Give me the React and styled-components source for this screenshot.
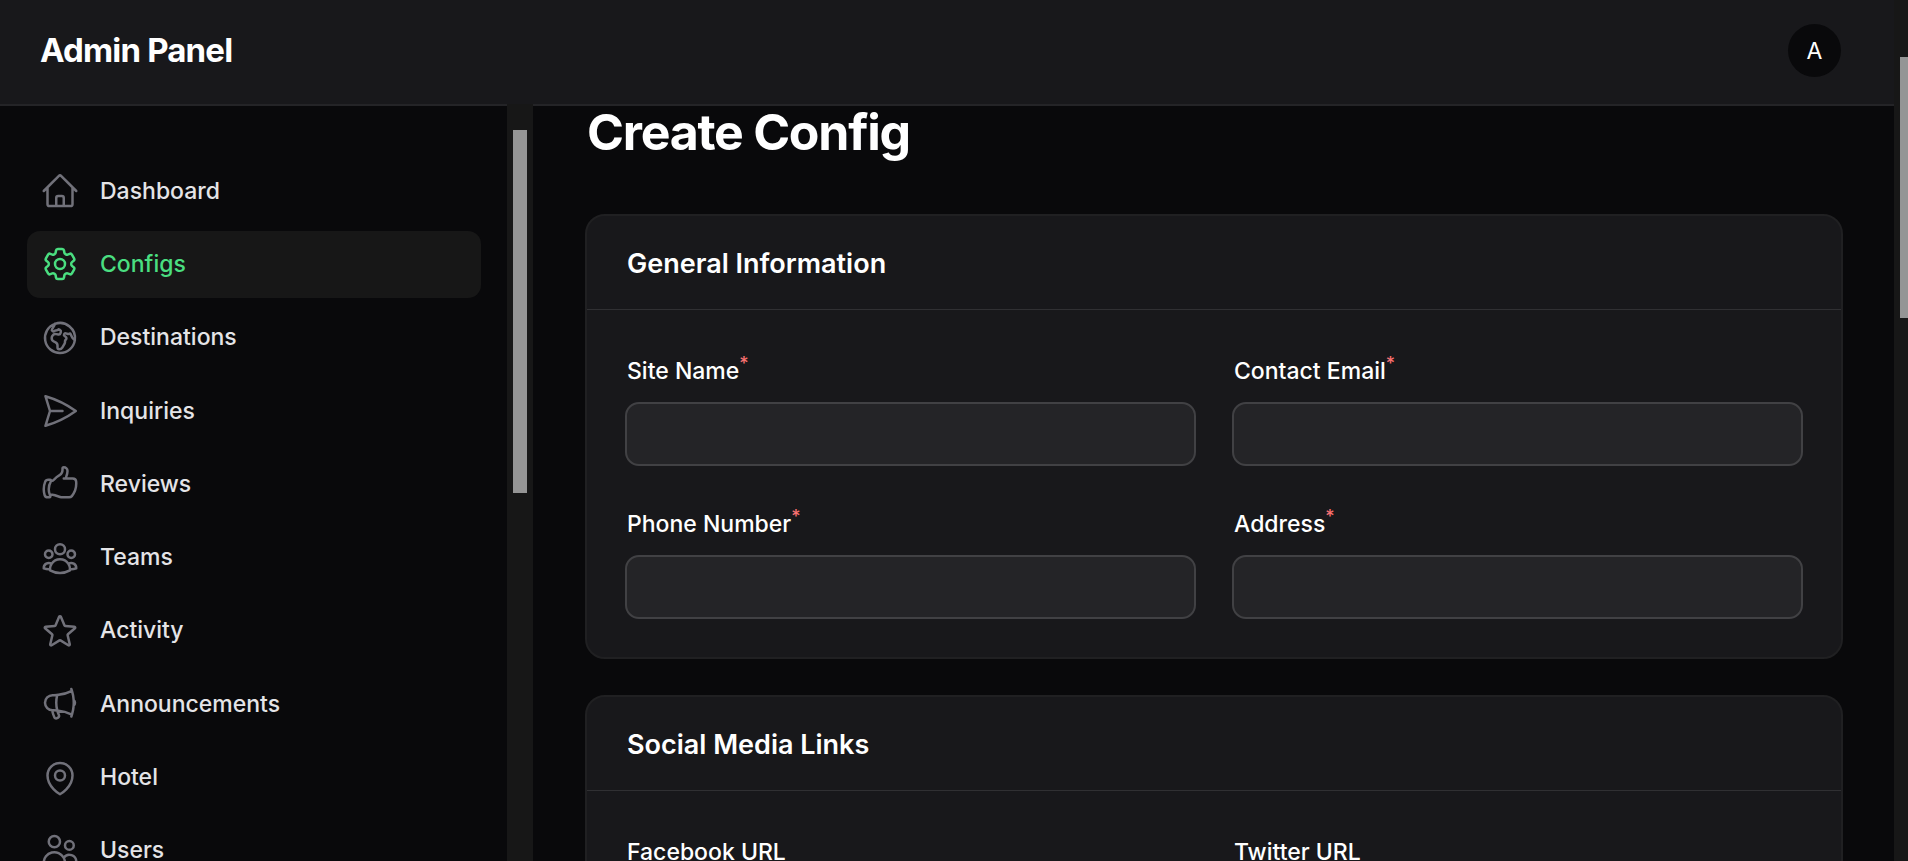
import React, { useId } from 'react';
import styled, { createGlobalStyle } from 'styled-components';
import {
  HiOutlineHome,
  HiOutlineCog6Tooth,
  HiOutlineGlobeEuropeAfrica,
  HiOutlinePaperAirplane,
  HiOutlineHandThumbUp,
  HiOutlineUserGroup,
  HiOutlineStar,
  HiOutlineMegaphone,
  HiOutlineMapPin,
  HiOutlineUsers,
} from 'react-icons/hi2';

const GlobalStyle = createGlobalStyle`
  *, *::before, *::after { box-sizing: border-box; }
  body {
    margin: 0;
    background: #09090b;
    color: #ffffff;
    font-family: Inter, "Liberation Sans", sans-serif;
  }
`;

const Page = styled.div`
  display: grid;
  grid-template-columns: minmax(0, 1fr) 14px;
  height: 100vh;
  overflow: hidden;
`;

const Shell = styled.div`
  display: flex;
  flex-direction: column;
  min-height: 0;
`;

const TopBar = styled.header`
  display: flex;
  flex: none;
  align-items: center;
  justify-content: space-between;
  padding: 24px 53px 27px 40px;
  background: #18181b;
`;

const Brand = styled.a`
  padding-bottom: 2px;
  color: #ffffff;
  font-size: 33px;
  font-weight: 700;
  line-height: 40px;
  letter-spacing: -0.025em;
  text-decoration: none;
`;

const Avatar = styled.button`
  width: 53px;
  height: 53px;
  padding: 0;
  border: 0;
  border-radius: 50%;
  background: #09090b;
  color: #ffffff;
  font: 400 23px/28px Inter, "Liberation Sans", sans-serif;
`;

const Body = styled.div`
  display: grid;
  grid-template-columns: 533px minmax(0, 1fr);
  flex: 1;
  min-height: 0;
`;

const Sidebar = styled.aside`
  display: grid;
  grid-template-columns: minmax(0, 1fr) 26px;
  min-height: 0;
`;

const Nav = styled.nav`
  min-height: 0;
  padding: 52px 26px 0 27px;
  border-top: 2px solid #242427;
  overflow: hidden;
`;

const NavList = styled.ul`
  display: grid;
  grid-auto-rows: 1fr;
  gap: 7px;
  min-height: 726px;
  margin: 0;
  padding: 0;
  list-style: none;
`;

const NavLink = styled.a`
  display: flex;
  align-items: center;
  gap: 20px;
  height: 100%;
  padding: 13px;
  border-radius: 13px;
  background: ${({ $active }) => ($active ? '#171717' : 'transparent')};
  color: ${({ $active }) => ($active ? '#4ade80' : '#e4e4e7')};
  font-size: 23px;
  font-weight: 500;
  line-height: 33px;
  text-decoration: none;

  svg {
    flex: none;
    width: 40px;
    height: 40px;
    color: ${({ $active }) => ($active ? '#4ade80' : '#71717a')};
  }
`;

const Track = styled.div`
  min-height: 0;
  padding: ${({ $start }) => $start}px 6px 0;
  background: #171717;
  overflow: hidden;
`;

const Thumb = styled.div`
  width: 14px;
  height: ${({ $length }) => $length}px;
  background: #959595;
`;

const Main = styled.main`
  display: flex;
  flex-direction: column;
  gap: 36px;
  min-height: 0;
  padding: 0 51px 0 52px;
  border-top: 2px solid #242427;
  overflow: hidden;
`;

const PageTitle = styled.h1`
  flex: none;
  margin: 0 0 20px 2px;
  font-size: 50px;
  font-weight: 700;
  line-height: 52px;
  letter-spacing: -0.025em;
`;

const Section = styled.section`
  flex: none;
  border: 2px solid #202022;
  border-radius: 20px;
  background: #18181b;
`;

const SectionHeader = styled.header`
  padding: 28px 40px 25px;
  border-bottom: 1px solid #303033;
`;

const SectionTitle = styled.h2`
  margin: 0;
  font-size: 27px;
  font-weight: 600;
  line-height: 40px;
`;

const FieldGrid = styled.div`
  display: grid;
  grid-template-columns: repeat(2, minmax(0, 1fr));
  gap: 38px 36px;
  padding: 41px 38px 38px;
`;

const Field = styled.div`
  display: flex;
  flex-direction: column;
  gap: 11px;
`;

const Label = styled.label`
  padding-left: 2px;
  font-size: 23px;
  font-weight: 500;
  line-height: 40px;
`;

const Required = styled.sup`
  color: #f87171;
  font-size: 18px;
  line-height: 0;
`;

const TextInput = styled.input`
  width: 100%;
  height: 64px;
  padding: 0 20px;
  border: 2px solid #414144;
  border-radius: 14px;
  background: #242427;
  color: #ffffff;
  font: 400 23px/40px Inter, "Liberation Sans", sans-serif;
  outline: none;
`;

const navItems = [
  { label: 'Dashboard', Icon: HiOutlineHome },
  { label: 'Configs', Icon: HiOutlineCog6Tooth, active: true },
  { label: 'Destinations', Icon: HiOutlineGlobeEuropeAfrica },
  { label: 'Inquiries', Icon: HiOutlinePaperAirplane },
  { label: 'Reviews', Icon: HiOutlineHandThumbUp },
  { label: 'Teams', Icon: HiOutlineUserGroup },
  { label: 'Activity', Icon: HiOutlineStar },
  { label: 'Announcements', Icon: HiOutlineMegaphone },
  { label: 'Hotel', Icon: HiOutlineMapPin },
  { label: 'Users', Icon: HiOutlineUsers },
];

const sections = [
  {
    title: 'General Information',
    fields: [
      { label: 'Site Name', required: true },
      { label: 'Contact Email', type: 'email', required: true },
      { label: 'Phone Number', type: 'tel', required: true },
      { label: 'Address', required: true },
    ],
  },
  {
    title: 'Social Media Links',
    fields: [
      { label: 'Facebook URL', type: 'url' },
      { label: 'Twitter URL', type: 'url' },
    ],
  },
];

function TextField({ label, type = 'text', required = false }) {
  const id = useId();
  return (
    <Field>
      <Label htmlFor={id}>
        {label}
        {required && <Required>*</Required>}
      </Label>
      <TextInput id={id} type={type} required={required} />
    </Field>
  );
}

export default function App() {
  return (
    <Page>
      <GlobalStyle />
      <Shell>
        <TopBar>
          <Brand href="#">Admin Panel</Brand>
          <Avatar type="button">A</Avatar>
        </TopBar>
        <Body>
          <Sidebar>
            <Nav>
              <NavList>
                {navItems.map(({ label, Icon, active }) => (
                  <li key={label}>
                    <NavLink href="#" $active={active} aria-current={active ? 'page' : undefined}>
                      <Icon aria-hidden="true" />
                      {label}
                    </NavLink>
                  </li>
                ))}
              </NavList>
            </Nav>
            <Track $start={26}>
              <Thumb $length={363} />
            </Track>
          </Sidebar>
          <Main>
            <PageTitle>Create Config</PageTitle>
            {sections.map(({ title, fields }) => (
              <Section key={title}>
                <SectionHeader>
                  <SectionTitle>{title}</SectionTitle>
                </SectionHeader>
                <FieldGrid>
                  {fields.map((field) => (
                    <TextField key={field.label} {...field} />
                  ))}
                </FieldGrid>
              </Section>
            ))}
          </Main>
        </Body>
      </Shell>
      <Track $start={57}>
        <Thumb $length={261} />
      </Track>
    </Page>
  );
}
